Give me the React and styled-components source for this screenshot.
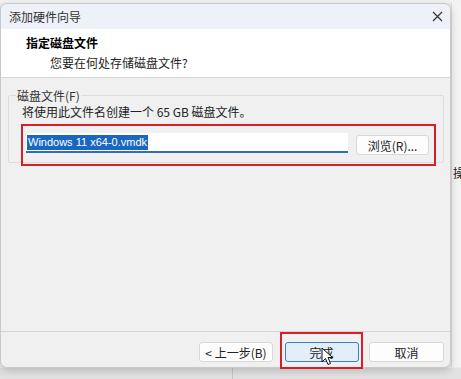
import styled, { createGlobalStyle } from "styled-components";

const Global = createGlobalStyle`
  html, body {
    margin: 0;
    padding: 0;
    background: #e4e4e4;
    font-family: "Noto Sans CJK SC", "Noto Sans", sans-serif;
    font-size: 12px;
    color: #1a1a1a;
  }
`;

const Desktop = styled.div`
  width: 461px;
  height: 379px;
  overflow: hidden;
  display: flex;
  flex-direction: column;
  background: #ececec;
`;

const TopStrip = styled.div`
  height: 3px;
  background: #f2f2f2;
  display: flex;
`;

const Middle = styled.div`
  display: flex;
  align-items: flex-start;
`;

const SideStrip = styled.div`
  flex: 1;
  min-width: 0;
  overflow: hidden;
  height: 364px;
  background: #f4f4f4;
  border-left: 1px solid #dcdcdc;
  display: flex;
  flex-direction: column;
`;

const SideChar = styled.div`
  margin-top: 161px;
  margin-left: 1px;
  font-size: 12px;
  color: #222;
  white-space: nowrap;
`;

const Window = styled.div`
  flex-shrink: 0;
  width: 449px;
  height: 363px;
  background: #f0f0f0;
  border: 1px solid #c9c9c9;
  border-radius: 7px;
  box-shadow: 0 3px 8px rgba(0, 0, 0, 0.18);
  display: flex;
  flex-direction: column;
  position: relative;
  z-index: 1;
`;

const TitleBar = styled.div`
  height: 25px;
  background: #eef1f7;
  border-radius: 7px 7px 0 0;
  display: flex;
  align-items: center;
  justify-content: space-between;
  padding: 0 7px 0 8px;
  font-size: 12px;
  color: #333;
`;

const CloseIcon = styled.svg`
  width: 11px;
  height: 11px;
`;

const Header = styled.div`
  height: 49px;
  background: #ffffff;
  border-bottom: 1px solid #d6d6d6;
  padding: 6px 0 0 25px;
  box-sizing: border-box;
`;

const HeaderTitle = styled.div`
  font-weight: bold;
  font-size: 12px;
  line-height: 16px;
  color: #000;
`;

const HeaderSub = styled.div`
  margin-top: 4px;
  padding-left: 24px;
  font-size: 12px;
  line-height: 16px;
  color: #222;
`;

const Body = styled.div`
  flex: 1;
  padding: 9px 7px 0 7px;
  display: flex;
  flex-direction: column;
`;

const Group = styled.fieldset`
  margin: 0;
  padding: 0 7px 0 13px;
  height: 76px;
  box-sizing: border-box;
  border: 1px solid #dcdcdc;
  border-radius: 2px;
`;

const Legend = styled.legend`
  padding: 0 1px;
  margin-left: -6px;
  font-size: 12px;
  color: #333;
`;

const Note = styled.div`
  font-size: 12px;
  line-height: 14px;
  color: #222;
  margin-top: 1px;
`;

const Highlight = styled.div`
  margin-top: 5px;
  margin-left: -1px;
  height: 42px;
  width: 415px;
  box-sizing: border-box;
  border: 2px solid #d5202c;
  display: flex;
  align-items: flex-start;
  padding: 7px 5px 0 3px;
  gap: 8px;
`;

const FileInput = styled.div`
  width: 323px;
  height: 20px;
  box-sizing: border-box;
  background: #fff;
  border-bottom: 2px solid #2f6dbf;
  display: flex;
  align-items: center;
  padding-left: 1px;
`;

const Selected = styled.span`
  background: #1a67c2;
  color: #fff;
  font-family: "Liberation Sans", "Noto Sans", sans-serif;
  font-size: 11px;
  line-height: 15px;
  padding: 0 1px;
`;

const Button = styled.button`
  width: ${(p) => p.$w || 74}px;
  height: 20px;
  box-sizing: border-box;
  border: 1px solid ${(p) => (p.$primary ? "#3a7ec8" : "#d8d8d8")};
  background: ${(p) => (p.$primary ? "#e3eefa" : "#fdfdfd")};
  border-radius: 3px;
  font-family: "Noto Sans CJK SC", "Noto Sans", sans-serif;
  font-size: 12px;
  color: #222;
  padding: 0;
  display: flex;
  align-items: center;
  justify-content: center;
  margin-top: ${(p) => p.$mt || 0}px;
`;

const Footer = styled.div`
  height: 35px;
  border-top: 1px solid #d4d4d4;
  display: flex;
  align-items: flex-start;
  justify-content: flex-end;
  padding: 0 6px 0 0;
  gap: 8px;
`;

const FinishFrame = styled.div`
  width: 83px;
  height: 37px;
  margin: 0 -2px 0 -1px;
  box-sizing: border-box;
  border: 2px solid #d5202c;
  display: flex;
  align-items: flex-start;
  justify-content: center;
  padding-top: 8px;
  position: relative;
`;

const Cursor = styled.svg`
  position: absolute;
  left: 39px;
  top: 13px;
  width: 13px;
  height: 20px;
`;

const BottomStrip = styled.div`
  flex: 1;
  background: #e2e2e2;
  display: flex;
`;

const VLine = styled.div`
  margin-left: 232px;
  width: 1px;
  background: #c8c8c8;
`;

export default function App() {
  return (
    <>
      <Global />
      <Desktop>
        <TopStrip />
        <Middle>
          <Window>
            <TitleBar>
              <span>添加硬件向导</span>
              <CloseIcon viewBox="0 0 11 11">
                <path d="M1 1 L10 10 M10 1 L1 10" stroke="#333" strokeWidth="1.2" />
              </CloseIcon>
            </TitleBar>
            <Header>
              <HeaderTitle>指定磁盘文件</HeaderTitle>
              <HeaderSub>您要在何处存储磁盘文件?</HeaderSub>
            </Header>
            <Body>
              <Group>
                <Legend>磁盘文件(F)</Legend>
                <Note>将使用此文件名创建一个 65 GB 磁盘文件。</Note>
                <Highlight>
                  <FileInput>
                    <Selected>Windows 11 x64-0.vmdk</Selected>
                  </FileInput>
                  <Button $w={73} $mt={2}>浏览(R)...</Button>
                </Highlight>
              </Group>
            </Body>
            <Footer>
              <Button $w={74} $mt={10}>&lt; 上一步(B)</Button>
              <FinishFrame>
                <Button $w={74} $primary>完成</Button>
                <Cursor viewBox="0 0 13 20">
                  <path
                    d="M1 1 L1 15 L4.5 11.5 L7 17.5 L9.5 16.5 L7 10.5 L11.5 10.5 Z"
                    fill="#fff"
                    stroke="#111"
                    strokeWidth="1"
                    strokeLinejoin="round"
                  />
                </Cursor>
              </FinishFrame>
              <Button $w={75} $mt={10}>取消</Button>
            </Footer>
          </Window>
          <SideStrip>
            <SideChar>操</SideChar>
          </SideStrip>
        </Middle>
        <BottomStrip>
          <VLine />
        </BottomStrip>
      </Desktop>
    </>
  );
}
